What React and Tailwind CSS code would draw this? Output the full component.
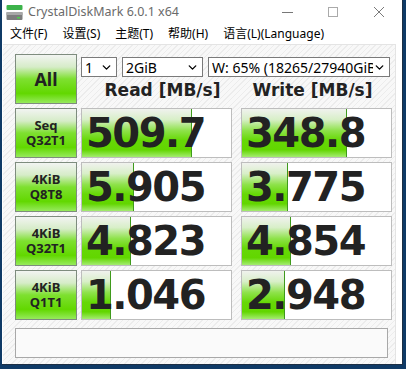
import { ChevronDown } from 'lucide-react';

const rows = [
  { a: 'Seq', b: 'Q32T1', read: '509.7', write: '348.8', rw: 111, ww: 106 },
  { a: '4KiB', b: 'Q8T8', read: '5.905', write: '3.775', rw: 53, ww: 47 },
  { a: '4KiB', b: 'Q32T1', read: '4.823', write: '4.854', rw: 50, ww: 50 },
  { a: '4KiB', b: 'Q1T1', read: '1.046', write: '2.948', rw: 30, ww: 44 },
];

function AppIcon() {
  return (
    <svg width="17" height="16" viewBox="0 0 17 16">
      <rect x="0.5" y="1" width="16" height="5" rx="1" fill="#3cb34a" />
      <rect x="0.5" y="8" width="16" height="8" rx="1" fill="#7d7d7d" />
      <rect x="0.5" y="8" width="16" height="3" fill="#a8a8a8" />
      <rect x="11" y="13" width="3" height="1.5" fill="#4ad04a" />
    </svg>
  );
}

function Select({ w, text }) {
  return (
    <div className={`${w} h-[20px] bg-white border border-[#7a7a7a] flex items-center pl-[3px] pr-[3px] text-[14px] text-black overflow-hidden`}>
      <span className="flex-1 whitespace-nowrap overflow-hidden">{text}</span>
      <ChevronDown className="w-[13px] h-[13px] shrink-0" strokeWidth={2.5} />
    </div>
  );
}

function Label({ children }) {
  return (
    <div className="w-[62px] h-[50px] shrink-0 border border-[#7e8c7e] bg-[linear-gradient(180deg,#f2f4f2_0%,#d6ecc8_25%,#7ee030_50%,#62d800_80%,#96ea5c_100%)] flex flex-col items-center justify-center text-[#222] font-bold leading-[15px] text-[13px]">
      {children}
    </div>
  );
}

function Cell({ value, width }) {
  return (
    <div className="relative w-[151px] h-[50px] shrink-0 bg-white border border-[#bdbdbd] flex items-center overflow-hidden">
      <div
        className="absolute left-0 top-0 bottom-0 border-r border-[#3f9a1c] bg-[linear-gradient(180deg,#f0f2ee_0%,#d8efc8_22%,#8ee24a_45%,#66d806_65%,#62d600_85%,#a4ec70_100%)]"
        style={{ width: width - 1 }}
      />
      <span className="relative pl-[4px] text-[40px] leading-none font-bold tracking-[-1.5px] text-[#222] font-['DejaVu_Sans',sans-serif]">
        {value}
      </span>
    </div>
  );
}

export default function App() {
  return (
    <div className="w-[406px] h-[369px] bg-[#0f3a66] flex font-['Noto_Sans','Noto_Sans_CJK_SC',sans-serif]">
      <div className="ml-[2px] w-[401px] h-[365px] bg-white flex flex-col border-r border-b border-[#1d2f44]">
        {/* title bar */}
        <div className="h-[24px] shrink-0 flex items-center pl-[4px] text-[12.5px] text-[#6a6a6a]">
          <AppIcon />
          <span className="ml-[5px]">CrystalDiskMark 6.0.1 x64</span>
          <div className="ml-auto flex items-center h-full">
            <div className="w-[46px] flex justify-center"><div className="w-[11px] h-px bg-[#777]" /></div>
            <div className="w-[46px] flex justify-center"><div className="w-[10px] h-[10px] border border-[#aaa]" /></div>
            <div className="w-[46px] flex justify-center text-[#777]">
              <svg width="12" height="12" viewBox="0 0 12 12"><path d="M1 1L11 11M11 1L1 11" stroke="#7a7a7a" strokeWidth="1" /></svg>
            </div>
          </div>
        </div>
        {/* menu bar */}
        <div className="h-[20px] shrink-0 flex items-center pl-[8px] gap-[15px] text-[12px] text-black">
          <span>文件(F)</span>
          <span>设置(S)</span>
          <span>主题(T)</span>
          <span>帮助(H)</span>
          <span>语言(L)(Language)</span>
        </div>
        {/* client */}
        <div className="flex-1 ml-[1px] mr-[6px] border-t border-r border-[#e4e4e4] bg-[repeating-linear-gradient(135deg,#f8f8f8_0px,#f8f8f8_3px,#ececec_3px,#ececec_4px)] pl-[12px] pt-[9px]">
          <div className="flex">
            <div className="w-[62px] h-[50px] shrink-0 border border-[#7e8c7e] bg-[linear-gradient(180deg,#f2f4f2_0%,#d6ecc8_25%,#7ee030_50%,#62d800_80%,#96ea5c_100%)] flex items-center justify-center text-[#222] font-bold text-[18px]">
              All
            </div>
            <div className="ml-[4px] flex flex-col">
              <div className="flex mt-[3px] gap-[5px]">
                <Select w="w-[36px]" text="1" />
                <Select w="w-[81px]" text="2GiB" />
                <Select w="w-[182px]" text="W: 65% (18265/27940GiB)" />
              </div>
              <div className="flex gap-[5px] h-[27px] items-center text-[17px] font-bold text-[#222] font-['DejaVu_Sans',sans-serif]">
                <div className="w-[151px] text-center pl-[12px]">Read [MB/s]</div>
                <div className="w-[151px] text-center">Write [MB/s]</div>
              </div>
            </div>
          </div>
          <div className="flex flex-col gap-[4px] mt-[4px]">
            {rows.map((r, i) => (
              <div key={i} className="flex gap-[4px]">
                <Label>
                  <span>{r.a}</span>
                  <span>{r.b}</span>
                </Label>
                <Cell value={r.read} width={r.rw} />
                <div className="w-px" />
                <Cell value={r.write} width={r.ww} />
              </div>
            ))}
          </div>
          <div className="mt-[8px] w-[373px] h-[30px] bg-[#fafafa] border border-[#a8a8a8]" />
        </div>
      </div>
    </div>
  );
}
